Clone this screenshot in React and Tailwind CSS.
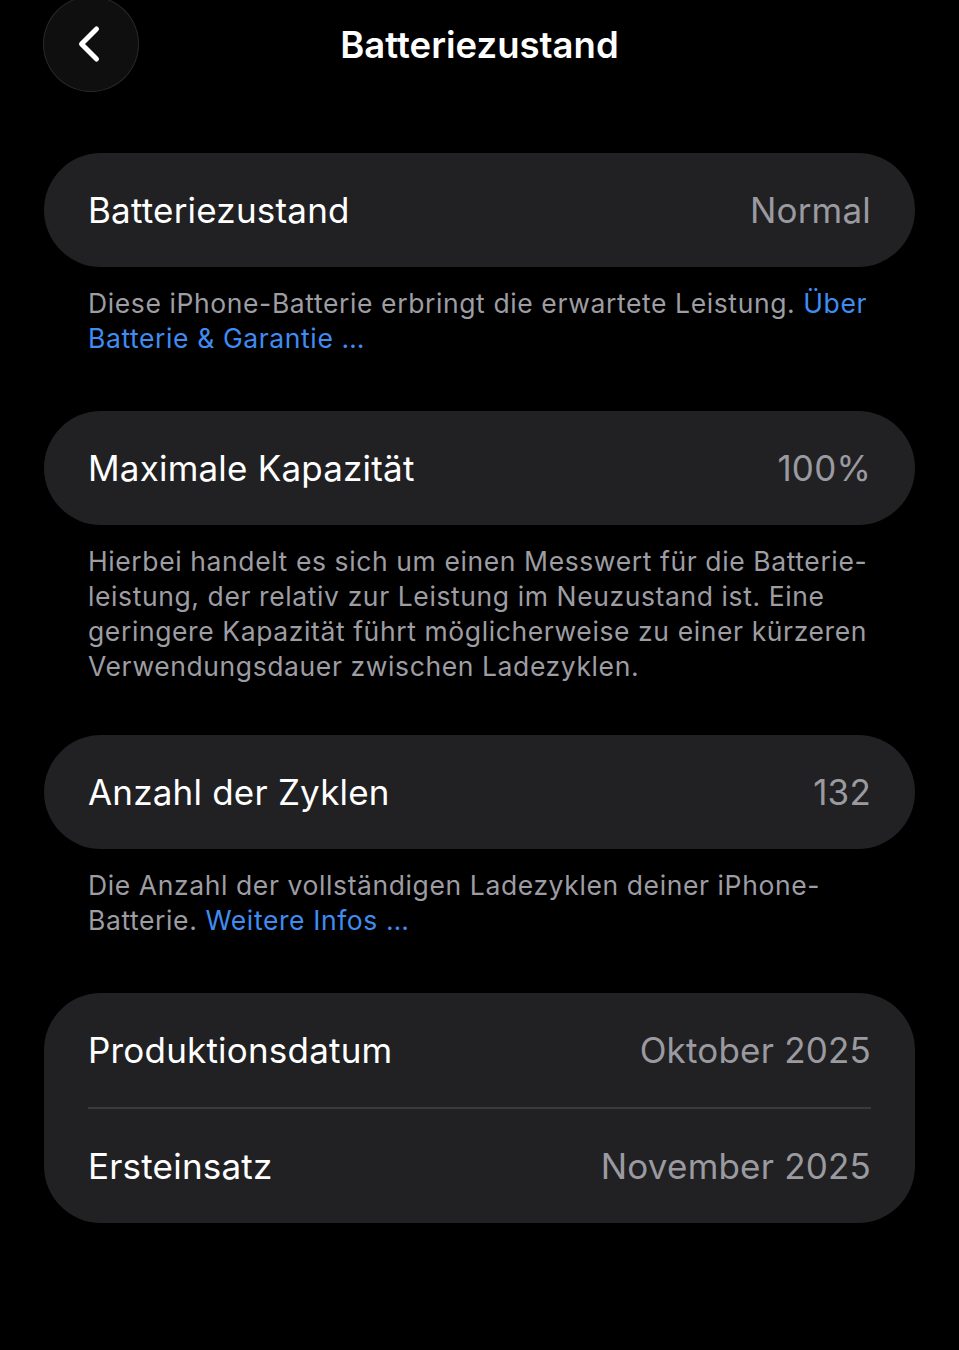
import { ChevronLeft } from 'lucide-react'

const font = { fontFamily: 'Inter, "Noto Sans", sans-serif' }

function Row({ label, value }) {
  return (
    <div className="flex h-[114px] items-center justify-between px-11">
      <span className="text-[35px] tracking-[0.2px] text-white">{label}</span>
      <span className="text-[35px] tracking-[0.2px] text-[#9a9aa0]">{value}</span>
    </div>
  )
}

function Card({ children }) {
  return <div className="overflow-hidden rounded-[57px] bg-[#212123]">{children}</div>
}

// each footer line is written out as the reference wraps it
function Footer({ lines }) {
  return (
    <div className="pl-11 pt-[19px] text-[26.5px] leading-[35px] tracking-[0.6px] text-[#9d9da3]">
      {lines.map((line, i) => (
        <div key={i} className="whitespace-nowrap">
          {line}
        </div>
      ))}
    </div>
  )
}

const link = 'text-[#3f8cf2]'

export default function App() {
  return (
    <div className="min-h-[1350px] w-[959px] overflow-hidden bg-black" style={font}>
      <header className="relative flex h-[90px] items-center justify-center">
        <button className="absolute left-[44px] top-[-3px] flex h-[94px] w-[94px] items-center justify-center rounded-full bg-[#0f0f0f] ring-1 ring-[#2a2a2a]">
          <ChevronLeft size={60} strokeWidth={2} className="mr-1 text-white" />
        </button>
        <h1 className="text-[36.5px] font-semibold text-white">Batteriezustand</h1>
      </header>

      <main className="px-11 pt-[63px]">
        <Card>
          <Row label="Batteriezustand" value="Normal" />
        </Card>
        <Footer
          lines={[
            <>
              Diese iPhone-Batterie erbringt die erwartete Leistung. <span className={link}>Über</span>
            </>,
            <span className={link}>Batterie &amp; Garantie …</span>,
          ]}
        />

        <div className="mt-[55px]">
          <Card>
            <Row label="Maximale Kapazität" value="100%" />
          </Card>
        </div>
        <Footer
          lines={[
            'Hierbei handelt es sich um einen Messwert für die Batterie-',
            'leistung, der relativ zur Leistung im Neuzustand ist. Eine',
            'geringere Kapazität führt möglicherweise zu einer kürzeren',
            'Verwendungsdauer zwischen Ladezyklen.',
          ]}
        />

        <div className="mt-[51px]">
          <Card>
            <Row label="Anzahl der Zyklen" value="132" />
          </Card>
        </div>
        <Footer
          lines={[
            'Die Anzahl der vollständigen Ladezyklen deiner iPhone-',
            <>
              Batterie. <span className={link}>Weitere Infos …</span>
            </>,
          ]}
        />

        <div className="mt-[55px]">
          <Card>
            <Row label="Produktionsdatum" value="Oktober 2025" />
            <div className="mx-11 h-[2px] bg-[#3a3a3d]" />
            <Row label="Ersteinsatz" value="November 2025" />
          </Card>
        </div>
      </main>
    </div>
  )
}
